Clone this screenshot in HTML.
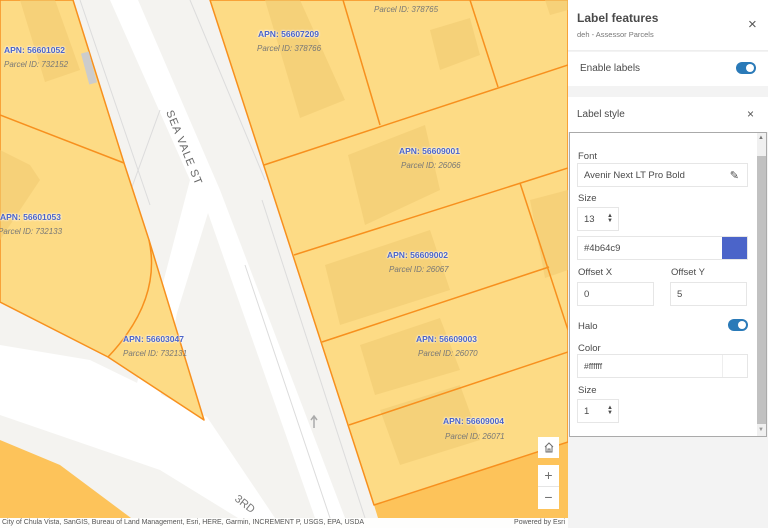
<!DOCTYPE html>
<html><head><meta charset="utf-8">
<style>
*{box-sizing:border-box;margin:0;padding:0}
body{width:768px;height:528px;overflow:hidden;position:relative;font-family:"Liberation Sans",sans-serif;background:#f4f3f0}
.lbl{position:absolute;font-size:8.5px;font-weight:bold;color:#4b64c9;white-space:nowrap;text-shadow:0 0 2px #fff,0 0 2px #fff}
.pid{position:absolute;font-size:8px;font-style:italic;color:#777;white-space:nowrap}
.panel{position:absolute;left:568px;top:0;width:200px;height:528px;background:#f3f3f3}
.t{position:absolute;color:#4a4a4a;font-size:9.5px;white-space:nowrap}
.inp{position:absolute;background:#fff;border:1px solid #e6e6e6;font-size:9.5px;color:#4a4a4a;padding-left:6px;display:flex;align-items:center}
.tog{position:absolute;width:20px;height:12px;border-radius:6px;background:#2a7ab8}
.tog:after{content:"";position:absolute;right:2px;top:2px;width:8px;height:8px;border-radius:50%;background:#fff}
.btn{position:absolute;left:538px;width:21px;background:#fff;color:#6e6e6e;text-align:center;font-size:14px;line-height:21px}
</style></head><body>
<svg width="568" height="528" style="position:absolute;left:0;top:0">
<rect width="568" height="528" fill="#f4f3f0"/>
<g fill="#fff">
<polygon points="110,0 138,0 220,190 345,518 315,518 208,213 177,313 155,423 130,410 163,283 190,180"/>
<polygon points="0,345 90,360 207,417 275,518 238,518 160,470 0,415"/>
</g>
<g fill="none" stroke="#dcdcdc" stroke-width="1">
<line x1="80" y1="0" x2="150" y2="205"/>
<line x1="190" y1="0" x2="265" y2="180"/>
<line x1="262" y1="200" x2="365" y2="518"/>
<line x1="245" y1="265" x2="330" y2="518"/>
<line x1="128" y1="198" x2="160" y2="110"/>
</g>
<polygon points="0,440 60,465 131,518 0,518" fill="#fdc35a"/>
<polygon points="374,505 568,442 568,518 378,518" fill="#fdc35a"/>
<g fill="#fddb85" stroke="#f7901e" stroke-width="1.5" stroke-linejoin="round">
<polygon points="0,0 73,0 124,163 149,240 204,420 108,357 0,302"/>
<polygon points="210,0 568,0 568,442 374,505"/>
</g>
<g fill="#f0c970" opacity="0.55">
<polygon points="20,0 55,0 80,70 45,82"/>
<polygon points="0,150 30,165 40,180 0,240"/>
<polygon points="265,0 300,0 345,100 300,118"/>
<polygon points="430,30 470,18 480,55 440,70"/>
<polygon points="545,0 568,0 568,10 550,15"/>
<polygon points="348,155 425,125 440,190 365,225"/>
<polygon points="325,265 430,230 450,290 340,325"/>
<polygon points="530,200 568,190 568,270 545,278"/>
<polygon points="360,345 440,318 460,370 375,395"/>
<polygon points="380,410 460,385 480,440 400,465"/>
</g>
<g stroke="#f7901e" stroke-width="1.5" fill="none">
<line x1="0" y1="115" x2="124" y2="163"/>
<path d="M149,240 Q162,300 108,357"/>
<line x1="343" y1="0" x2="380" y2="125"/>
<line x1="470" y1="0" x2="498" y2="87"/>
<line x1="264" y1="165" x2="568" y2="65"/>
<line x1="294" y1="255" x2="568" y2="168"/>
<line x1="520" y1="183" x2="568" y2="330"/>
<line x1="322" y1="342" x2="549" y2="267"/>
<line x1="349" y1="425" x2="568" y2="352"/>
</g>
<rect x="85" y="52" width="8" height="32" fill="#ccc" transform="rotate(-15 89 68)"/>
<text x="0" y="0" transform="translate(166,112) rotate(68)" font-family="Liberation Sans" font-size="11" fill="#666" letter-spacing="1">SEA VALE ST</text>
<text x="0" y="0" transform="translate(234,500) rotate(38)" font-family="Liberation Sans" font-size="11" fill="#777">3RD</text>
<path d="M314,428 l0,-12 m-3,4 l3,-4 l3,4" stroke="#aaa" stroke-width="1.5" fill="none"/>
</svg>
<div class="lbl" style="left:4px;top:45px">APN: 56601052</div><div class="pid" style="left:4px;top:60px">Parcel ID: 732152</div>
<div class="lbl" style="left:0px;top:212px">APN: 56601053</div><div class="pid" style="left:-2px;top:227px">Parcel ID: 732133</div>
<div class="lbl" style="left:123px;top:334px">APN: 56603047</div><div class="pid" style="left:123px;top:349px">Parcel ID: 732131</div>
<div class="pid" style="left:374px;top:5px">Parcel ID: 378765</div>
<div class="lbl" style="left:258px;top:29px">APN: 56607209</div><div class="pid" style="left:257px;top:44px">Parcel ID: 378766</div>
<div class="lbl" style="left:399px;top:146px">APN: 56609001</div><div class="pid" style="left:401px;top:161px">Parcel ID: 26066</div>
<div class="lbl" style="left:387px;top:250px">APN: 56609002</div><div class="pid" style="left:389px;top:265px">Parcel ID: 26067</div>
<div class="lbl" style="left:416px;top:334px">APN: 56609003</div><div class="pid" style="left:418px;top:349px">Parcel ID: 26070</div>
<div class="lbl" style="left:443px;top:416px">APN: 56609004</div><div class="pid" style="left:445px;top:432px">Parcel ID: 26071</div>

<div class="btn" style="top:437px;height:21px"><svg width="12" height="12" viewBox="0 0 12 12" style="margin-top:4px"><path d="M2,6 L6,2 L10,6 M3,5 V11 H9 V5 M5,11 V8 H7 V11" fill="none" stroke="#6e6e6e" stroke-width="1"/></svg></div>
<div class="btn" style="top:465px;height:22px;border-bottom:1px solid #e5e5e5">+</div>
<div class="btn" style="top:487px;height:22px">−</div>
<div style="position:absolute;left:0;top:518px;width:568px;height:10px;background:rgba(255,255,255,.85);font-size:7px;color:#555;line-height:10px;padding-left:2px">City of Chula Vista, SanGIS, Bureau of Land Management, Esri, HERE, Garmin, INCREMENT P, USGS, EPA, USDA<span style="position:absolute;right:3px">Powered by Esri</span></div>

<div class="panel">
<div style="position:absolute;left:0;top:0;width:200px;height:51px;background:#fff;border-bottom:1px solid #eee"></div>
<div class="t" style="left:9px;top:11px;font-size:12px;font-weight:bold;color:#4a4a4a">Label features</div>
<div class="t" style="left:9px;top:30px;font-size:7.5px;color:#777">deh - Assessor Parcels</div>
<div class="t" style="left:180px;top:16px;font-size:15px;color:#555">×</div>
<div style="position:absolute;left:0;top:52px;width:200px;height:34px;background:#fff"></div>
<div class="t" style="left:12px;top:63px;font-size:10px">Enable labels</div>
<div class="tog" style="left:168px;top:62px"></div>
<div style="position:absolute;left:0;top:97px;width:200px;height:35px;background:#fff"></div>
<div class="t" style="left:9px;top:109px;font-size:10px">Label style</div>
<div class="t" style="left:179px;top:107px;font-size:12px;color:#555">×</div>
<div style="position:absolute;left:1px;top:132px;width:198px;height:305px;background:#fff;border:1px solid #aaa"></div>
<div style="position:absolute;left:189px;top:133px;width:9px;height:303px;background:#f0f0f0"></div>
<div style="position:absolute;left:189px;top:156px;width:9px;height:268px;background:#c1c1c1"></div>
<div class="t" style="left:190px;top:135px;font-size:6px;color:#777">▲</div>
<div class="t" style="left:190px;top:427px;font-size:6px;color:#999">▼</div>
<div class="t" style="left:10px;top:151px">Font</div>
<div class="inp" style="left:9px;top:163px;width:171px;height:24px">Avenir Next LT Pro Bold<span style="position:absolute;right:8px;font-size:11px">✎</span></div>
<div class="t" style="left:10px;top:193px">Size</div>
<div class="inp" style="left:9px;top:207px;width:42px;height:24px">13<span style="position:absolute;right:5px;font-size:6px;line-height:5px">▲<br>▼</span></div>
<div class="inp" style="left:9px;top:236px;width:171px;height:24px">#4b64c9</div>
<div style="position:absolute;left:154px;top:237px;width:25px;height:22px;background:#4b64c9"></div>
<div class="t" style="left:10px;top:267px">Offset X</div>
<div class="t" style="left:103px;top:267px">Offset Y</div>
<div class="inp" style="left:9px;top:282px;width:77px;height:24px">0</div>
<div class="inp" style="left:102px;top:282px;width:77px;height:24px">5</div>
<div class="t" style="left:10px;top:321px">Halo</div>
<div class="tog" style="left:160px;top:319px"></div>
<div class="t" style="left:10px;top:343px">Color</div>
<div class="inp" style="left:9px;top:354px;width:171px;height:24px;font-size:8.5px">#ffffff</div>
<div style="position:absolute;left:154px;top:355px;width:1px;height:22px;background:#eee"></div>
<div class="t" style="left:10px;top:385px">Size</div>
<div class="inp" style="left:9px;top:399px;width:42px;height:24px">1<span style="position:absolute;right:5px;font-size:6px;line-height:5px">▲<br>▼</span></div>
</div>
</body></html>
